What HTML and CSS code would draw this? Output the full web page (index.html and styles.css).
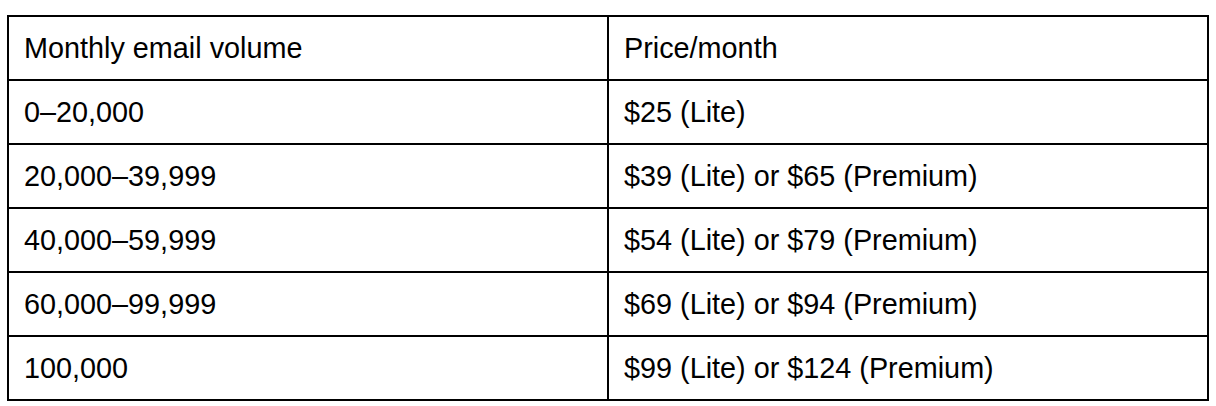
FILE: index.html
```html
<!DOCTYPE html>
<html>
<head>
<meta charset="utf-8">
<link rel="stylesheet" href="styles.css">
</head>
<body>
<table class="pricing">
  <tr><td>Monthly email volume</td><td>Price/month</td></tr>
  <tr><td>0–20,000</td><td>$25 (Lite)</td></tr>
  <tr><td>20,000–39,999</td><td>$39 (Lite) or $65 (Premium)</td></tr>
  <tr><td>40,000–59,999</td><td>$54 (Lite) or $79 (Premium)</td></tr>
  <tr><td>60,000–99,999</td><td>$69 (Lite) or $94 (Premium)</td></tr>
  <tr><td>100,000</td><td>$99 (Lite) or $124 (Premium)</td></tr>
</table>
</body>
</html>
```

FILE: styles.css
```css
html, body {
  margin: 0;
  padding: 0;
  background: #fff;
}
body {
  padding: 15px 0 0 7px;
}
.pricing {
  border-collapse: collapse;
  width: 1202px;
  table-layout: fixed;
  font-family: "Liberation Sans", Arial, sans-serif;
  font-size: 28.8px;
  color: #000;
}
.pricing td {
  border: 2px solid #000;
  padding: 0 15px;
  height: 64px;
  box-sizing: border-box;
  vertical-align: middle;
  width: 50%;
}
```
